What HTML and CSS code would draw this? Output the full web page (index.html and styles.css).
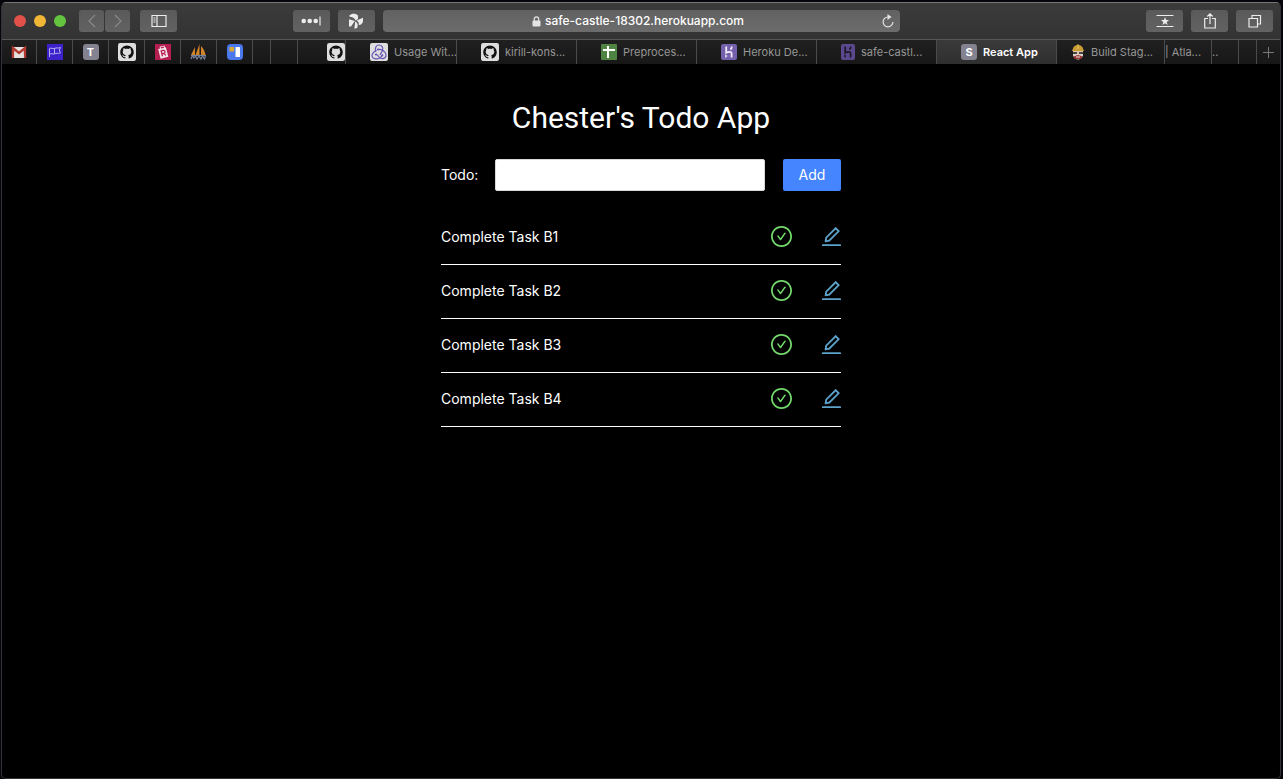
FILE: index.html
```html
<!DOCTYPE html>
<html lang="en">
<head>
<meta charset="utf-8">
<title>React App</title>
<link rel="stylesheet" href="styles.css">
</head>
<body>
<svg class="defs" aria-hidden="true">
  <symbol id="github" viewBox="0 0 32 32">
    <rect width="32" height="32" rx="4" fill="#dedede"/>
    <path fill="#111" transform="translate(4 4)" d="M12 .297c-6.63 0-12 5.373-12 12 0 5.303 3.438 9.8 8.205 11.385.6.113.82-.258.82-.577 0-.285-.01-1.04-.015-2.04-3.338.724-4.042-1.61-4.042-1.61C4.422 18.07 3.633 17.7 3.633 17.7c-1.087-.744.084-.729.084-.729 1.205.084 1.838 1.236 1.838 1.236 1.07 1.835 2.809 1.305 3.495.998.108-.776.417-1.305.76-1.605-2.665-.3-5.466-1.332-5.466-5.93 0-1.31.465-2.38 1.235-3.22-.135-.303-.54-1.523.105-3.176 0 0 1.005-.322 3.3 1.23.96-.267 1.98-.399 3-.405 1.02.006 2.04.138 3 .405 2.28-1.552 3.285-1.23 3.285-1.23.645 1.653.24 2.873.12 3.176.765.84 1.23 1.91 1.23 3.22 0 4.61-2.805 5.625-5.475 5.92.42.36.81 1.096.81 2.22 0 1.606-.015 2.896-.015 3.286 0 .315.21.69.825.57C20.565 22.092 24 17.592 24 12.297c0-6.627-5.373-12-12-12"/>
  </symbol>
  <symbol id="heroku" viewBox="0 0 16 16">
    <path fill="none" stroke="currentColor" stroke-width="1.8" d="M5.2 2.5v6.3c1.800-.9 5.400-1.900 5.400.6v4.200M10.800 2.500c0 1.200-.4 2.100-1.300 3.100"/>
    <path fill="currentColor" d="M4.300 10.300l2.200 1.800-2.200 1.800z"/>
  </symbol>
  <symbol id="check" viewBox="64 64 896 896">
    <path fill="currentColor" d="M699 353h-46.900c-10.200 0-19.900 4.900-25.900 13.300L469 584.300l-71.200-98.800c-6-8.300-15.600-13.300-25.900-13.300H325c-6.500 0-10.300 7.400-6.500 12.700l124.600 172.800a31.800 31.800 0 0 0 51.700 0l210.600-292c3.900-5.300.1-12.700-6.400-12.700z"/>
    <path fill="currentColor" d="M512 64C264.600 64 64 264.600 64 512s200.600 448 448 448 448-200.600 448-448S759.400 64 512 64zm0 820c-205.400 0-372-166.600-372-372s166.600-372 372-372 372 166.600 372 372-166.600 372-372 372z"/>
  </symbol>
  <symbol id="edit" viewBox="112 112 800 800">
    <path fill="currentColor" d="M257.700 752c2 0 4-.2 6-.5L431.900 722c2-.4 3.900-1.300 5.300-2.800l423.900-423.900a9.960 9.960 0 0 0 0-14.100L694.900 114.900c-1.900-1.900-4.400-2.900-7.100-2.900s-5.200 1-7.100 2.900L256.800 538.800c-1.500 1.500-2.400 3.300-2.800 5.300l-29.500 168.200a33.500 33.500 0 0 0 9.400 29.800c6.600 6.400 14.900 9.900 23.800 9.900zm67.400-174.400L687.800 215l73.300 73.300-362.700 362.600-88.900 15.700 15.600-89zM880 836H144c-17.700 0-32 14.300-32 32v36c0 4.400 3.600 8 8 8h784c4.400 0 8-3.600 8-8v-36c0-17.700-14.300-32-32-32z"/>
  </symbol>
</svg>

<div class="window">
  <header class="toolbar">
    <div class="toolbar-side">
      <div class="lights">
        <button class="light red" aria-label="Close"></button>
        <button class="light yellow" aria-label="Minimize"></button>
        <button class="light green" aria-label="Zoom"></button>
      </div>
      <div class="history">
        <button class="tool back dim" aria-label="Back"><svg width="10" height="14" viewBox="0 0 10 14"><path d="M8 1 2 7l6 6"/></svg></button>
        <button class="tool forward dim" aria-label="Forward"><svg width="10" height="14" viewBox="0 0 10 14"><path d="m2 1 6 6-6 6"/></svg></button>
      </div>
      <button class="tool" aria-label="Sidebar"><svg width="16" height="12" viewBox="0 0 16 12"><path d="M1 .5h14v11H1zM6 .5v11"/><path stroke-width="1" d="M2.500 3h2M2.500 5h2M2.500 7h2"/></svg></button>
      <div class="extensions">
        <button class="tool" aria-label="Password extension"><svg width="20" height="12" viewBox="0 0 20 12"><g class="solid"><circle cx="2.700" cy="6" r="2.300"/><circle cx="8.700" cy="6" r="2.300"/><circle cx="14.700" cy="6" r="2.300"/></g><path d="M19 1.500v9"/></svg></button>
        <button class="tool" aria-label="Pinwheel extension"><svg width="16" height="16" viewBox="0 0 16 16"><g class="solid"><path d="M1.500 2.300C3.500.3 8 0 10 2.500V6L7.500 7.500C6.500 5 4.500 3.800 1.500 3.800z"/><path d="M8.500 7.500 15 4.800v3.400c-.5 3-2.700 4-4.200 3.700C11 10 10.500 8.500 8.500 7.500z"/><path d="M7.300 8.500c2.200 1.200 3 3.700 2 5.900-.8.900-2 1.100-3 1z"/><path d="M1 6.200 6.800 8 3 13.500H1z"/></g></svg></button>
      </div>
    </div>
    <div class="address">
      <svg class="lock" width="9" height="11" viewBox="0 0 9 11"><rect x="0.500" y="4.500" width="8" height="6" rx="1" fill="#e4e4e4"/><path d="M2.300 5V3a2.200 2.200 0 0 1 4.400 0v2" fill="none" stroke="#e4e4e4" stroke-width="1.200"/></svg>
      <span>safe-castle-18302.herokuapp.com</span>
      <button class="reload" aria-label="Reload"><svg width="12" height="14" viewBox="0 0 12 14"><path d="M7 3H6a4.900 4.900 0 1 0 4.900 5" fill="none" stroke="#e4e4e4" stroke-width="1.200"/><path d="M5.500 0 9.500 3 5.500 6z" fill="#e4e4e4"/></svg></button>
    </div>
    <div class="toolbar-side end">
      <button class="tool" aria-label="Favorites"><svg width="18" height="14" viewBox="0 0 18 14"><path stroke-width="1" d="M.5 1.500h17M.5 12.500h17"/><path class="solid" d="m9 3 1.100 2.900 3 .1-2.400 1.900.9 3L9 9.200l-2.600 1.700.9-3L4.900 6l3-.1z"/></svg></button>
      <button class="tool" aria-label="Share"><svg width="12" height="16" viewBox="0 0 12 16"><path d="M4 5.500H.700v9.500h10.600V5.500H8M6 11V1M3.300 3.500 6 .9l2.700 2.600"/></svg></button>
      <button class="tool" aria-label="Show all tabs"><svg width="14" height="14" viewBox="0 0 14 14"><path d="M1 4.500h8.500V13H1zM4 4.500V1.500h8.500V10h-3"/></svg></button>
    </div>
  </header>

  <nav class="tabs" aria-label="Tabs">
    <a class="pin first" href="#" aria-label="Mail"><svg width="16" height="16" viewBox="0 0 16 16"><rect x="1" y="3" width="14" height="11" fill="#e6e2e0"/><path d="M2 14V4l6 5 6-5v10" fill="none" stroke="#b23a31" stroke-width="2.400"/><path d="M3.400 14V9.500L8 12l4.600-2.500V14z" fill="#e6e2e0"/></svg></a>
    <a class="pin" href="#" aria-label="Flags"><svg width="16" height="16" viewBox="0 0 16 16"><rect width="16" height="16" fill="#3d22cc"/><path d="M2.500 13V4.500c2-1 3 .6 5-.2v5.500c-2 .8-3-.8-5 .2M7.500 4.500c2-1.300 3.500.2 6-1l-1.200 2.500 1 3c-2.300 1-3.800-.4-5.800.8" fill="none" stroke="#b6b0f3"/></svg></a>
    <a class="pin" href="#"><span class="letter">T</span></a>
    <a class="pin" href="#" aria-label="GitHub"><svg width="18" height="18"><use href="#github"/></svg></a>
    <a class="pin" href="#" aria-label="Rebrickable"><svg width="16" height="16" viewBox="0 0 16 16"><rect width="16" height="16" fill="#b51f50"/><g transform="rotate(-14 8 8)"><path d="M4 4h2V2h5v2h1v10H4z" fill="#f4e4ea"/><path d="M6.500 12V6.500h2a1.400 1.400 0 0 1 0 3h-2m2 0 1.500 2.500M7 3.500h3" fill="none" stroke="#b51f50" stroke-width="1.300"/></g></svg></a>
    <a class="pin" href="#" aria-label="Sails"><svg width="17" height="16" viewBox="0 0 17 16"><path d="M5 3 1 11h4zM9.500 0 5.500 11h4zM11 2v9h4.500C15 7 13 4 11 2z" fill="#d18427"/><path d="M1 11.500h15M1 15l1.500-3.500L4 14l1.500-2L7 15l2-3 2 3 1.500-3 2 3 1-3.500" fill="none" stroke="#77829f" stroke-width="1.200"/></svg></a>
    <a class="pin" href="#" aria-label="Board"><svg width="16" height="16" viewBox="0 0 16 16"><rect width="16" height="16" rx="4" fill="#4c78ed"/><rect x="2.500" y="3" width="4.500" height="4.500" fill="#d9aa32"/><rect x="8.500" y="3" width="4.500" height="10" rx=".5" fill="#fff"/></svg></a>
    <a class="pin narrow" href="#" aria-label="Tab"></a>
    <a class="pin short" href="#" aria-label="Tab"></a>
    <a class="pin clipped" href="#" aria-label="GitHub"><svg width="18" height="18"><use href="#github"/></svg></a>
    <a class="tab compact" href="#"><svg width="18" height="18" viewBox="0 0 18 18"><rect width="18" height="18" rx="2" fill="#dedede"/><g fill="none" stroke="#6652b5" stroke-width="1.200"><path d="M5.800 8.500C4.500 4.500 6.500 2 9 2s4.600 2.500 3.600 5.500L10 12"/><path d="M8 6.500c4-.5 7.500 2 8 5 .4 3-2 4.500-4.500 4S8 13 7 11.500"/><path d="M12.500 12.500C10.500 15 7 16.300 4.500 15.600 2 15 1.500 12.500 2.500 10.700S5 8 6.500 7.500"/></g><g fill="#6652b5"><circle cx="8" cy="6.500" r="1.100"/><circle cx="12.300" cy="12.300" r="1.100"/><circle cx="6" cy="11.500" r="1.100"/></g></svg><span>Usage Wit...</span></a>
    <a class="tab kirill" href="#"><svg width="18" height="18"><use href="#github"/></svg><span>kirill-kons...</span></a>
    <a class="tab" href="#"><svg width="16" height="16" viewBox="0 0 16 16"><rect width="16" height="16" rx="1" fill="#4f8443"/><path d="M7 2v12M2 6h12" stroke="#fff" stroke-width="2"/></svg><span>Preproces...</span></a>
    <a class="tab" href="#"><svg class="heroku-light" width="16" height="16"><rect width="16" height="16" rx="2" fill="#7560ac"/><use href="#heroku"/></svg><span>Heroku De...</span></a>
    <a class="tab" href="#"><svg class="heroku-dark" width="14" height="16" viewBox="1 0 14 16"><rect x="1" width="14" height="16" rx="2" fill="#5c488f"/><use href="#heroku" width="16" height="16"/></svg><span>safe-castl...</span></a>
    <a class="tab active" href="#" aria-current="page"><span class="letter">S</span><span>React App</span></a>
    <a class="tab build" href="#"><svg width="14" height="16" viewBox="0 0 14 16"><path d="M2 7h10v3.500c0 2.500-2 5-5 5s-5-2.500-5-5z" fill="#dcc6b0"/><path d="M1.500 6C2 2.500 4 1 7 1s5 1.500 5.500 5l1 1H.5z" fill="#c79d34"/><path d="M6 .5h2V5H6z" fill="#d8b04a"/><path d="M2 8h4v2H2zM8 8h4v2H8z" fill="#4a4540"/><path d="M2 10h10v2H2z" fill="#d8d0c8"/><path d="M2.500 12.500 7 11l4.500 1.500L10 15H4z" fill="#982f2a"/><path d="M5 12.500h4v1H5z" fill="#eee"/></svg><span>Build Stag...</span></a>
    <a class="sliver atla" href="#"><span>| Atla...</span></a>
    <a class="sliver short" href="#"><span>..</span></a>
    <a class="pin narrow" href="#" aria-label="Tab"></a>
    <button class="new-tab" aria-label="New tab"><svg width="11" height="11" viewBox="0 0 11 11"><path d="M5.500 0v11M0 5.500h11" stroke="#777"/></svg></button>
  </nav>

  <main class="app">
    <h1>Chester's Todo App</h1>
    <form class="todo-form">
      <label for="todo">Todo:</label>
      <input id="todo" type="text">
      <button type="button">Add</button>
    </form>
    <ul class="todo-list">
      <li><span>Complete Task B1</span><button class="done" aria-label="Complete B1"><svg width="21" height="21"><use href="#check"/></svg></button><button class="edit" aria-label="Edit B1"><svg width="19" height="19"><use href="#edit"/></svg></button></li>
      <li><span>Complete Task B2</span><button class="done" aria-label="Complete B2"><svg width="21" height="21"><use href="#check"/></svg></button><button class="edit" aria-label="Edit B2"><svg width="19" height="19"><use href="#edit"/></svg></button></li>
      <li><span>Complete Task B3</span><button class="done" aria-label="Complete B3"><svg width="21" height="21"><use href="#check"/></svg></button><button class="edit" aria-label="Edit B3"><svg width="19" height="19"><use href="#edit"/></svg></button></li>
      <li><span>Complete Task B4</span><button class="done" aria-label="Complete B4"><svg width="21" height="21"><use href="#check"/></svg></button><button class="edit" aria-label="Edit B4"><svg width="19" height="19"><use href="#edit"/></svg></button></li>
    </ul>
  </main>
</div>
</body>
</html>
```
FILE: styles.css
```css
* {
  box-sizing: border-box;
}

body {
  margin: 0;
  padding: 2px 2px 0 1px;
  min-height: 100vh;
  display: flex;
  background: #05050b;
  color: #fff;
  font-family: Inter, "Liberation Sans", sans-serif;
  font-size: 14px;
  line-height: 22px;
}

button {
  border: 0;
  padding: 0;
  background: none;
  color: inherit;
  font: inherit;
}

svg {
  display: block;
  flex: none;
}

.defs {
  position: absolute;
  width: 0;
  height: 0;
}

.window {
  flex: 1;
  min-width: 0;
  border: 1px solid #343234;
  border-top-color: #777672;
  border-radius: 5px;
  background: #000;
  overflow: hidden;
}

/* Toolbar */
.toolbar {
  display: grid;
  grid-template-columns: 1fr minmax(0, 517px) 1fr;
  gap: 8px;
  align-items: center;
  height: 36px;
  padding: 0 7px;
  background: linear-gradient(#3b3b3b, #333);
}

.toolbar-side {
  display: flex;
  align-items: center;
  gap: 10px;
}

.toolbar-side.end {
  justify-content: flex-end;
  gap: 8px;
}

.lights {
  display: flex;
  gap: 8px;
  padding: 0 3px 0 5px;
}

.light {
  width: 12px;
  height: 12px;
  border-radius: 50%;
}

.red {
  background: #e2504a;
}

.yellow {
  background: #f0b636;
}

.green {
  background: #64c43f;
}

.history {
  display: flex;
  gap: 1px;
}

.tool {
  display: flex;
  align-items: center;
  justify-content: center;
  width: 37px;
  height: 22px;
  border-radius: 3px;
  background: linear-gradient(#5a5a5a, #626262);
}

.tool path {
  fill: none;
  stroke: #ececec;
  stroke-width: 1.2;
}

.tool .solid,
.tool .solid path {
  fill: #ececec;
  stroke: none;
}

.tool.dim {
  width: 25px;
}

.tool.dim path {
  stroke: #888;
}

.extensions {
  display: flex;
  gap: 8px;
  margin-left: auto;
}

.address {
  display: grid;
  grid-template-columns: 1fr auto auto 1fr;
  align-items: center;
  gap: 4px;
  height: 22px;
  padding-right: 6px;
  border-radius: 4px;
  background: linear-gradient(#616161, #6c6c6c);
  font-size: 12px;
  font-weight: 500;
}

.lock {
  grid-column: 2;
}

.reload {
  justify-self: end;
}

/* Tabs */
.tabs {
  display: flex;
  height: 25px;
  border-top: 1px solid #565656;
  background: linear-gradient(#202020, #171717);
  font-size: 11px;
}

.tabs a {
  display: flex;
  align-items: center;
  overflow: hidden;
  border-right: 1px solid #4b4b4b;
  color: #969696;
  text-decoration: none;
  white-space: nowrap;
}

.pin {
  flex: none;
  width: 36px;
  justify-content: center;
}

.pin.first {
  width: 35px;
}

.pin.narrow {
  width: 18px;
}

.short {
  width: 27px;
}

.pin.clipped {
  width: 48px;
  justify-content: flex-end;
}

.tab {
  flex: 1 1 120px;
  gap: 6px;
  padding-left: 24px;
}

.tab.compact {
  flex-basis: 111px;
}

.tab.build {
  flex-basis: 108px;
  padding-left: 14px;
}

.tabs .active {
  background: linear-gradient(#3a3a3a, #2f2f2f);
  color: #fff;
  font-weight: 600;
}

.sliver {
  flex: none;
}

.atla {
  width: 47px;
}

.letter {
  flex: none;
  width: 16px;
  height: 16px;
  border-radius: 3px;
  background: #828290;
  color: #fff;
  font-weight: 700;
  line-height: 16px;
  text-align: center;
}

.heroku-light {
  color: #f1edf8;
}

.heroku-dark {
  color: #1d1926;
}

.new-tab {
  display: flex;
  flex: none;
  align-items: center;
  justify-content: center;
  width: 23px;
}

/* Todo app */
.app {
  max-width: 400px;
  margin: 0 auto;
  padding-top: 34px;
}

h1 {
  margin: 0 0 21px;
  font-family: Roboto, Inter, sans-serif;
  font-size: 30px;
  font-weight: 400;
  line-height: 40px;
  text-align: center;
}

.todo-form {
  display: flex;
  align-items: center;
  gap: 18px;
  margin-bottom: 20px;
}

.todo-form label {
  width: 36px;
}

.todo-form input {
  flex: 1;
  min-width: 0;
  height: 32px;
  padding: 4px 11px;
  border: 1px solid #d9d9d9;
  border-radius: 2px;
  background: #fff;
  font: inherit;
}

.todo-form button {
  width: 58px;
  height: 32px;
  border-radius: 2px;
  background: #4585ff;
}

.todo-list {
  margin: 0;
  padding: 0;
  list-style: none;
}

.todo-list li {
  display: flex;
  align-items: center;
  gap: 30px;
  height: 54px;
  padding-bottom: 2px;
  border-bottom: 1px solid #fff;
}

.todo-list span {
  flex: 1;
}

.done {
  color: #73d96b;
}

.edit {
  color: #5ea3cb;
}
```
